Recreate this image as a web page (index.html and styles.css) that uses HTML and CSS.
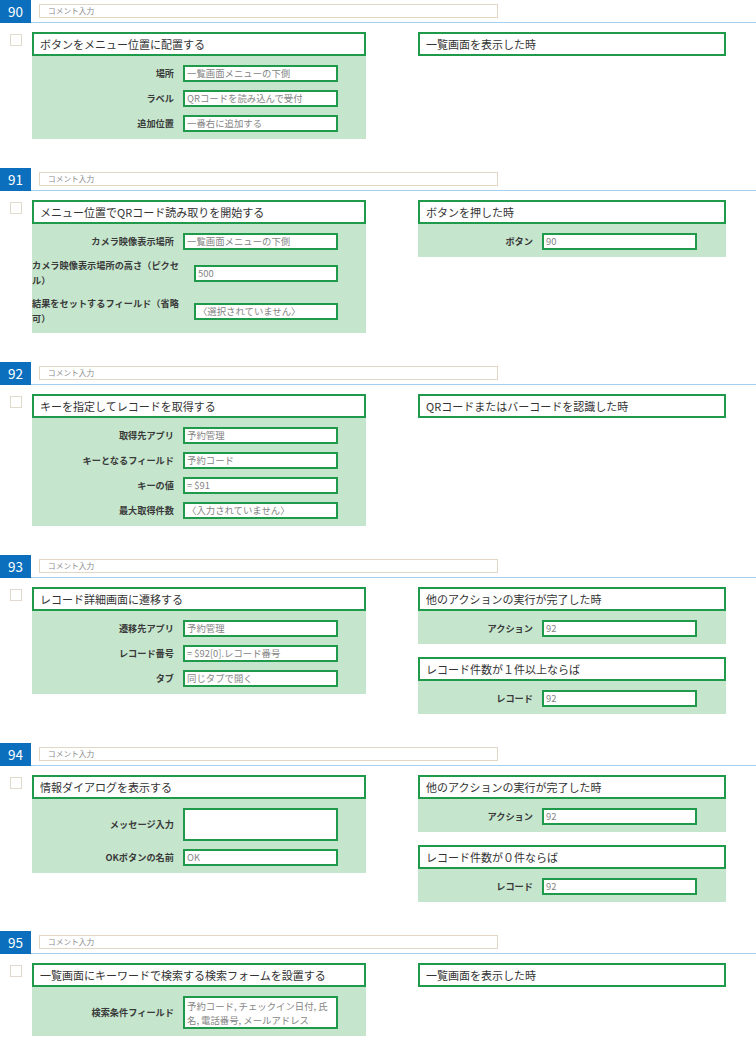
FILE: index.html
```html
<!DOCTYPE html>
<html lang="ja">
<head>
<meta charset="utf-8">
<title>Actions</title>
<link rel="stylesheet" href="styles.css">
</head>
<body>

<section class="step">
  <div class="step-head"><div class="num">90</div><div class="head-rest"><div class="comment">コメント入力</div></div></div>
  <div class="step-body">
    <div class="check-col"><span class="check"></span></div>
    <div class="col-left">
      <div class="panel">
        <div class="panel-title">ボタンをメニュー位置に配置する</div>
        <div class="panel-body">
          <div class="row"><div class="label">場所</div><div class="field">一覧画面メニューの下側</div></div>
          <div class="row"><div class="label">ラベル</div><div class="field">QRコードを読み込んで受付</div></div>
          <div class="row"><div class="label">追加位置</div><div class="field">一番右に追加する</div></div>
        </div>
      </div>
    </div>
    <div class="col-right">
      <div class="panel"><div class="panel-title">一覧画面を表示した時</div></div>
    </div>
  </div>
</section>

<section class="step">
  <div class="step-head"><div class="num">91</div><div class="head-rest"><div class="comment">コメント入力</div></div></div>
  <div class="step-body">
    <div class="check-col"><span class="check"></span></div>
    <div class="col-left">
      <div class="panel">
        <div class="panel-title">メニュー位置でQRコード読み取りを開始する</div>
        <div class="panel-body">
          <div class="row"><div class="label">カメラ映像表示場所</div><div class="field">一覧画面メニューの下側</div></div>
          <div class="row"><div class="label">カメラ映像表示場所の高さ（ピクセル）</div><div class="field">500</div></div>
          <div class="row"><div class="label">結果をセットするフィールド（省略可）</div><div class="field">〈選択されていません〉</div></div>
        </div>
      </div>
    </div>
    <div class="col-right">
      <div class="panel">
        <div class="panel-title">ボタンを押した時</div>
        <div class="panel-body">
          <div class="row"><div class="label">ボタン</div><div class="field">90</div></div>
        </div>
      </div>
    </div>
  </div>
</section>

<section class="step">
  <div class="step-head"><div class="num">92</div><div class="head-rest"><div class="comment">コメント入力</div></div></div>
  <div class="step-body">
    <div class="check-col"><span class="check"></span></div>
    <div class="col-left">
      <div class="panel">
        <div class="panel-title">キーを指定してレコードを取得する</div>
        <div class="panel-body">
          <div class="row"><div class="label">取得先アプリ</div><div class="field">予約管理</div></div>
          <div class="row"><div class="label">キーとなるフィールド</div><div class="field">予約コード</div></div>
          <div class="row"><div class="label">キーの値</div><div class="field">= $91</div></div>
          <div class="row"><div class="label">最大取得件数</div><div class="field">〈入力されていません〉</div></div>
        </div>
      </div>
    </div>
    <div class="col-right">
      <div class="panel"><div class="panel-title">QRコードまたはバーコードを認識した時</div></div>
    </div>
  </div>
</section>

<section class="step">
  <div class="step-head"><div class="num">93</div><div class="head-rest"><div class="comment">コメント入力</div></div></div>
  <div class="step-body">
    <div class="check-col"><span class="check"></span></div>
    <div class="col-left">
      <div class="panel">
        <div class="panel-title">レコード詳細画面に遷移する</div>
        <div class="panel-body">
          <div class="row"><div class="label">遷移先アプリ</div><div class="field">予約管理</div></div>
          <div class="row"><div class="label">レコード番号</div><div class="field">= $92[0].レコード番号</div></div>
          <div class="row"><div class="label">タブ</div><div class="field">同じタブで開く</div></div>
        </div>
      </div>
    </div>
    <div class="col-right">
      <div class="panel">
        <div class="panel-title">他のアクションの実行が完了した時</div>
        <div class="panel-body">
          <div class="row"><div class="label">アクション</div><div class="field">92</div></div>
        </div>
      </div>
      <div class="panel">
        <div class="panel-title">レコード件数が１件以上ならば</div>
        <div class="panel-body">
          <div class="row"><div class="label">レコード</div><div class="field">92</div></div>
        </div>
      </div>
    </div>
  </div>
</section>

<section class="step">
  <div class="step-head"><div class="num">94</div><div class="head-rest"><div class="comment">コメント入力</div></div></div>
  <div class="step-body">
    <div class="check-col"><span class="check"></span></div>
    <div class="col-left">
      <div class="panel">
        <div class="panel-title">情報ダイアログを表示する</div>
        <div class="panel-body">
          <div class="row"><div class="label">メッセージ入力</div><div class="field tall"></div></div>
          <div class="row"><div class="label">OKボタンの名前</div><div class="field">OK</div></div>
        </div>
      </div>
    </div>
    <div class="col-right">
      <div class="panel">
        <div class="panel-title">他のアクションの実行が完了した時</div>
        <div class="panel-body">
          <div class="row"><div class="label">アクション</div><div class="field">92</div></div>
        </div>
      </div>
      <div class="panel">
        <div class="panel-title">レコード件数が０件ならば</div>
        <div class="panel-body">
          <div class="row"><div class="label">レコード</div><div class="field">92</div></div>
        </div>
      </div>
    </div>
  </div>
</section>

<section class="step">
  <div class="step-head"><div class="num">95</div><div class="head-rest"><div class="comment">コメント入力</div></div></div>
  <div class="step-body">
    <div class="check-col"><span class="check"></span></div>
    <div class="col-left">
      <div class="panel">
        <div class="panel-title">一覧画面にキーワードで検索する検索フォームを設置する</div>
        <div class="panel-body">
          <div class="row"><div class="label">検索条件フィールド</div><div class="field tall">予約コード, チェックイン日付, 氏名, 電話番号, メールアドレス</div></div>
        </div>
      </div>
    </div>
    <div class="col-right">
      <div class="panel"><div class="panel-title">一覧画面を表示した時</div></div>
    </div>
  </div>
</section>

</body>
</html>
```

FILE: styles.css
```css
* { box-sizing: border-box; }

html, body {
  margin: 0;
  padding: 0;
  background: #ffffff;
}

body {
  font-family: "Noto Sans CJK JP", "Noto Sans", sans-serif;
  color: #333333;
  width: 756px;
}

.step {
  padding-bottom: 29px;
}

.step-head {
  display: flex;
  height: 23px;
}

.num {
  width: 31px;
  height: 23px;
  background: #0b6fbe;
  color: #ffffff;
  font-size: 13.5px;
  line-height: 23px;
  padding-left: 8px;
}

.head-rest {
  flex: 1;
  border-bottom: 1px solid #a6d0ef;
  padding: 4px 0 0 8px;
}

.comment {
  width: 459px;
  height: 14px;
  border: 1px solid #e4d6c5;
  font-size: 7.7px;
  line-height: 12px;
  color: #8a8a8a;
  padding-left: 8px;
  background: #ffffff;
}

.step-body {
  display: flex;
  align-items: flex-start;
  padding-top: 9px;
}

.check-col {
  width: 32px;
  flex: none;
  padding: 2px 0 0 10px;
}

.check {
  display: block;
  width: 12px;
  height: 12px;
  border: 1px solid #e2d9cd;
  background: #ffffff;
}

.col-left {
  width: 334px;
  flex: none;
}

.col-right {
  width: 308px;
  flex: none;
  margin-left: 52px;
  display: flex;
  flex-direction: column;
  gap: 13px;
}

.panel-title {
  height: 24px;
  border: 2px solid #1f9a4a;
  background: #ffffff;
  font-size: 11px;
  line-height: 20px;
  padding-left: 6px;
  color: #333333;
  white-space: nowrap;
}

.panel-body {
  background: #c5e6cd;
  padding: 9px 28px 7px 0;
  display: flex;
  flex-direction: column;
  gap: 8px;
}

.col-right .panel-body {
  padding-right: 29px;
}

.row {
  display: flex;
  justify-content: flex-end;
  align-items: center;
  gap: 9px;
}

.label {
  flex: 0 1 auto;
  min-width: 0;
  font-size: 9.2px;
  font-weight: 700;
  line-height: 15px;
  color: #3a3a3a;
}

.field {
  flex: 0 1 155px;
  min-width: 0;
  height: 17px;
  border: 2px solid #1f9a4a;
  background: #ffffff;
  font-size: 9.4px;
  line-height: 13px;
  color: #858585;
  padding: 0 2px;
  white-space: nowrap;
  overflow: hidden;
}

.field.tall {
  height: 33px;
  white-space: normal;
  line-height: 14px;
  padding-top: 1px;
}
```
